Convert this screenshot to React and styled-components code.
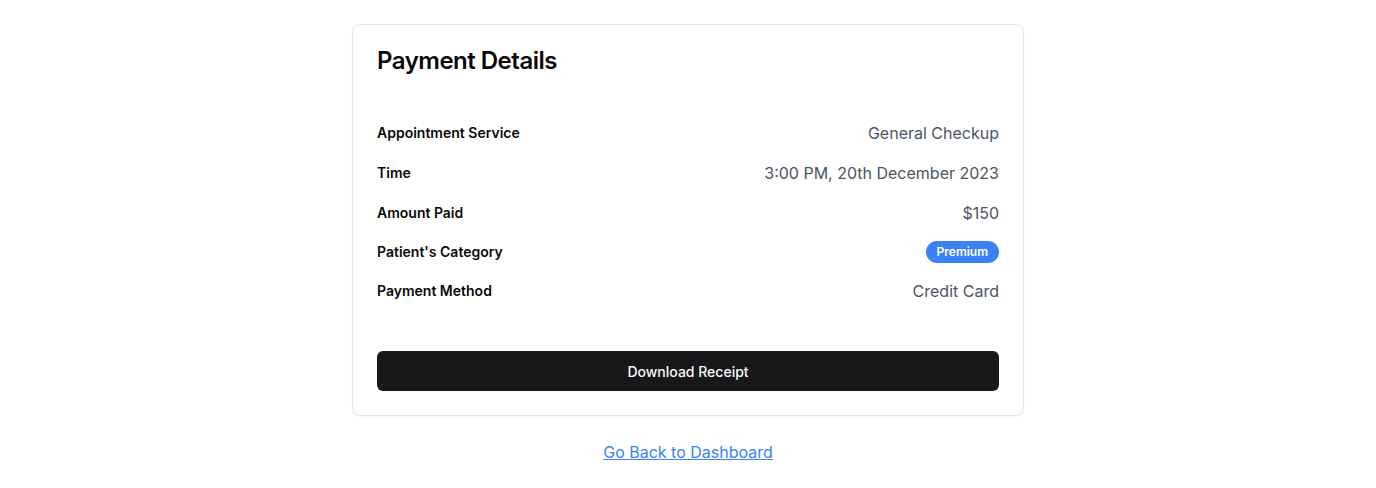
import React from "react";
import styled, { createGlobalStyle } from "styled-components";

const GlobalStyle = createGlobalStyle`
  * { box-sizing: border-box; }
  body {
    margin: 0;
    background: #ffffff;
    font-family: Inter, "Noto Sans", sans-serif;
    color: #0a0a0a;
  }
`;

const Page = styled.main`
  display: flex;
  flex-direction: column;
  align-items: center;
  padding: 24px 0;
`;

const Card = styled.section`
  width: 672px;
  border: 1px solid #e5e7eb;
  border-radius: 8px;
  background: #fff;
  box-shadow: 0 1px 2px rgba(0, 0, 0, 0.04);
`;

const CardHeader = styled.header`
  padding: 24px 24px 24px;
`;

const Title = styled.h2`
  margin: 0;
  font-size: 24px;
  line-height: 1;
  font-weight: 600;
  letter-spacing: -0.5px;
  color: #0a0a0a;
`;

const CardContent = styled.div`
  padding: 0 24px 24px;
  display: flex;
  flex-direction: column;
`;

const Details = styled.dl`
  margin: 24px 0 0;
  display: flex;
  flex-direction: column;
  gap: 16px;
`;

const Row = styled.div`
  display: flex;
  align-items: center;
  justify-content: space-between;
`;

const Label = styled.dt`
  font-size: 14px;
  line-height: 20px;
  font-weight: 600;
  color: #0a0a0a;
`;

const Value = styled.dd`
  margin: 0;
  display: flex;
  font-size: 16px;
  line-height: 24px;
  color: #4b5563;
`;

const Badge = styled.span`
  display: inline-flex;
  align-items: center;
  height: 22px;
  padding: 0 11px;
  border-radius: 999px;
  background: #3b82f6;
  color: #fff;
  font-size: 12px;
  line-height: 16px;
  font-weight: 600;
`;

const Button = styled.button`
  margin-top: 48px;
  height: 40px;
  width: 100%;
  border: 0;
  border-radius: 6px;
  background: #18181b;
  color: #fafafa;
  font-family: inherit;
  font-size: 14px;
  font-weight: 500;
  cursor: pointer;
`;

const BackLink = styled.a`
  margin-top: 24px;
  font-size: 16px;
  line-height: 24px;
  color: #3b82f6;
  text-decoration: underline;
`;

const details = [
  { label: "Appointment Service", value: "General Checkup" },
  { label: "Time", value: "3:00 PM, 20th December 2023" },
  { label: "Amount Paid", value: "$150" },
  { label: "Patient's Category", badge: "Premium" },
  { label: "Payment Method", value: "Credit Card" },
];

export default function App() {
  return (
    <>
      <GlobalStyle />
      <Page>
        <Card>
          <CardHeader>
            <Title>Payment Details</Title>
          </CardHeader>
          <CardContent>
            <Details>
              {details.map((d) => (
                <Row key={d.label}>
                  <Label>{d.label}</Label>
                  <Value>{d.badge ? <Badge>{d.badge}</Badge> : d.value}</Value>
                </Row>
              ))}
            </Details>
            <Button>Download Receipt</Button>
          </CardContent>
        </Card>
        <BackLink href="#">Go Back to Dashboard</BackLink>
      </Page>
    </>
  );
}
